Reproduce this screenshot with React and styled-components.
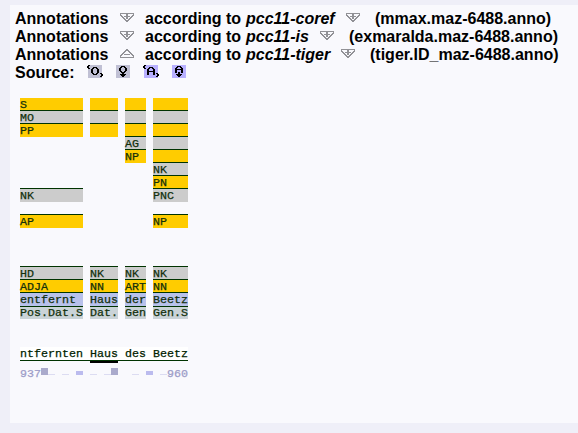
import React from "react";
import styled, { createGlobalStyle } from "styled-components";

const Global = createGlobalStyle`
  * { box-sizing: border-box; }
  body { margin: 0; background: #efeff8; overflow: hidden; }
`;
const Page = styled.main`
  height: 433px;
  padding: 5px 0 10px 10px;
`;
const Panel = styled.section`
  height: 418px;
  background: #f9f9fd;
  padding: 5px 0 0 5px;
`;
const Heading = styled.div`
  height: 18px;
  display: flex;
  align-items: flex-start;
  white-space: pre;
  font: bold 16px/18px "Liberation Sans", Arial, sans-serif;
  color: #000;
`;
const Label = styled.span`
  flex: none;
  width: ${(p) => p.$w}px;
`;
const Scheme = styled.em`
  flex: none;
  width: ${(p) => p.$w}px;
`;
const Toggle = styled.svg`
  flex: none;
  display: block;
  width: 14px;
  height: 9px;
  margin: 3px ${(p) => p.$gap}px 0 0;
`;
const Tool = styled.svg`
  flex: none;
  display: block;
  width: 16px;
  height: 13px;
  margin: 1px 12px 0 0;
`;
const Tiers = styled.div`
  display: grid;
  grid-template-columns: 63px 28px 21px 35px;
  column-gap: 7px;
  grid-template-rows: repeat(15, 13px) 14px 13px;
  margin: 15px 0 0 5px;
`;
const mono = `
  font: 11.667px/15px "Liberation Mono", "Courier New", monospace;
  -webkit-text-stroke: 0.25px currentColor;
  white-space: pre;
`;
const Cell = styled.div`
  grid-column: ${(p) => p.$col};
  grid-row: ${(p) => p.$row};
  height: ${(p) => (p.$row === 17 ? 13 : 14)}px;
  padding-top: ${(p) => (p.$row === 17 ? 1 : 2)}px;
  border-top: 1px solid ${(p) => (p.$row === 1 ? "#f9f9fd" : "#003300")};
  background: ${(p) => p.$bg};
  color: #12300c;
  ${mono}
  line-height: 11px;
`;
const Text = styled.div`
  width: 168px;
  height: 14px;
  margin: 28px 0 0 5px;
  background: #fff;
  border-bottom: 1px solid #003300;
  color: #002200;
  ${mono}
`;
const Match = styled.span`
  display: inline-block;
  height: 16px;
  border-bottom: 2px solid #000;
`;
const Ruler = styled.div`
  display: flex;
  width: 168px;
  height: 14px;
  margin: 6px 0 0 5px;
  color: #9c9cc8;
  ${mono}
`;
const Marks = styled.svg`
  flex: none;
  display: block;
  width: 126px;
  height: 14px;
`;

function Pixels({ rows, x = 0, y = 0, fill }) {
  const d = rows.flatMap((row, r) =>
    [...row].map((ch, c) => (ch === "#" ? `M${x + c} ${y + r}h1v1h-1z` : ""))
  ).join("");
  return <path d={d} fill={fill} shapeRendering="crispEdges" />;
}

const DOWN = [
  "##############",
  "#.....##.....#",
  "##....##....##",
  ".##.######.##.",
  "..##..##..##..",
  "...##.##.##...",
  "....##..##....",
  ".....####.....",
  "......##......",
];
const UP = [
  "......##......",
  ".....####.....",
  "....##..##....",
  "...##....##...",
  "..##......##..",
  ".##.######.##.",
  "##..........##",
  "#............#",
  "##############",
];
const RANGE_O = [
  ".##.............",
  "##..............",
  "##....####......",
  ".##..##..##.....",
  "....##....##....",
  "....##....##....",
  "....##....##....",
  "....##....##....",
  ".....##..##..##.",
  "......####....##",
  "..............##",
  ".............##.",
];
const RANGE_A = [
  ".##.............",
  "##..............",
  "##....####......",
  ".##..##..##.....",
  "....##....##....",
  "....##....##....",
  "....########....",
  "....##....##....",
  "....##....##.##.",
  "....##....##..##",
  "..............##",
  ".............##.",
];
const POINT_O = [
  "......####......",
  ".....##..##.....",
  "....##....##....",
  "....##....##....",
  "....##....##....",
  ".....##..##.....",
  "......####......",
  ".......##.......",
  ".....######.....",
  "......####......",
  ".......##.......",
];
const POINT_A = [
  "......####......",
  ".....##..##.....",
  "....##....##....",
  "....########....",
  "....##....##....",
  "....##....##....",
  "....##.##.##....",
  ".......##.......",
  ".....######.....",
  "......####......",
  ".......##.......",
];

function Arrow({ rows = DOWN, gap }) {
  return (
    <Toggle $gap={gap} viewBox="0 0 14 9">
      <Pixels rows={rows} fill="#919196" />
    </Toggle>
  );
}

const tools = [
  ["#c0c0d4", RANGE_O, 0],
  ["#c0c0d4", POINT_O, 1],
  ["#b8b0ff", RANGE_A, 0],
  ["#b8b0ff", POINT_A, 1],
];
const sources = [
  ["pcc11-coref", 100, 15, "(mmax.maz-6488.anno)"],
  ["pcc11-is", 74, 15, "(exmaralda.maz-6488.anno)"],
  ["pcc11-tiger", 95, 15, "(tiger.ID_maz-6488.anno)"],
];
const Y = "#ffcc00", G = "#cccccc", B = "#b8c1eb", T = "#cad3d7";
const cells = [
  [1, Y, "S", "", "", ""],
  [2, G, "MO", "", "", ""],
  [3, Y, "PP", "", "", ""],
  [4, G, null, null, "AG", ""],
  [5, Y, null, null, "NP", ""],
  [6, G, null, null, null, "NK"],
  [7, Y, null, null, null, "PN"],
  [8, G, "NK", null, null, "PNC"],
  [10, Y, "AP", null, null, "NP"],
  [14, G, "HD", "NK", "NK", "NK"],
  [15, Y, "ADJA", "NN", "ART", "NN"],
  [16, B, "entfernt", "Haus", "der", "Beetz"],
  [17, T, "Pos.Dat.S", "Dat.", "Gen", "Gen.S"],
];

export default function App() {
  return (
    <Page>
      <Global />
      <Panel>
        {sources.map(([name, w, gap, file], i) => (
          <Heading key={name}>
            <Label $w={105}>Annotations</Label>
            <Arrow rows={i === 2 ? UP : DOWN} gap={11} />
            <Label $w={101}>according to </Label>
            <Scheme $w={w}>{name}</Scheme>
            <Arrow gap={gap} />
            <span>{file}</span>
          </Heading>
        ))}
        <Heading>
          <Label $w={72}>Source:</Label>
          {tools.map(([bg, rows, y], i) => (
            <Tool key={i} viewBox="0 0 16 13">
              <rect x="1" width="14" height="13" fill={bg} />
              <Pixels rows={rows} y={y} fill="#000" />
            </Tool>
          ))}
        </Heading>
        <Tiers>
          {cells.flatMap(([row, bg, ...labels]) =>
            labels.map((t, c) => t === null ? null : (
              <Cell key={`${row}-${c}`} $row={row} $col={c + 1} $bg={bg}>{t}</Cell>
            ))
          )}
        </Tiers>
        <Text>ntfernten <Match>Haus</Match> des Beetz</Text>
        <Ruler>
          <span>937</span>
          <Marks viewBox="0 0 126 14" shapeRendering="crispEdges">
            {[7, 21, 49, 63, 91, 119].map((x) => <rect key={x} x={x} y="7" width="7" height="1" fill="#dcdcf2" />)}
            {[35, 105].map((x) => <rect key={x} x={x} y="4" width="7" height="4" fill="#bbbbee" />)}
            {[0, 70].map((x) => <rect key={x} x={x} y="1" width="7" height="7" fill="#aaaacc" />)}
          </Marks>
          <span>960</span>
        </Ruler>
      </Panel>
    </Page>
  );
}
